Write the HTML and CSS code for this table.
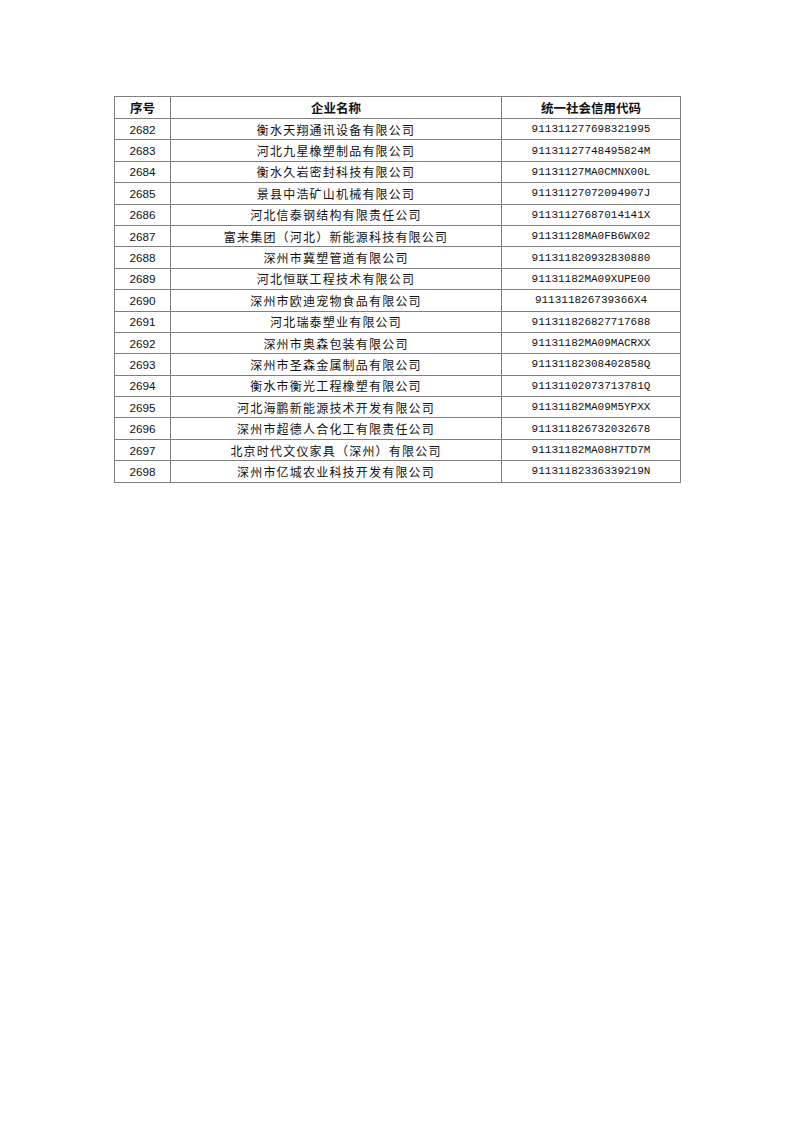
FILE: index.html
```html
<!DOCTYPE html>
<html lang="zh">
<head>
<meta charset="utf-8">
<link rel="stylesheet" href="styles.css">
</head>
<body>
<div class="page">
<table class="list">
<colgroup><col class="c-no"><col class="c-name"><col class="c-code"></colgroup>
<thead>
<tr><th>序号</th><th>企业名称</th><th>统一社会信用代码</th></tr>
</thead>
<tbody>
<tr><td class="no">2682</td><td class="name">衡水天翔通讯设备有限公司</td><td class="code">911311277698321995</td></tr>
<tr><td class="no">2683</td><td class="name">河北九星橡塑制品有限公司</td><td class="code">91131127748495824M</td></tr>
<tr><td class="no">2684</td><td class="name">衡水久岩密封科技有限公司</td><td class="code">91131127MA0CMNX00L</td></tr>
<tr><td class="no">2685</td><td class="name">景县中浩矿山机械有限公司</td><td class="code">91131127072094907J</td></tr>
<tr><td class="no">2686</td><td class="name">河北信泰钢结构有限责任公司</td><td class="code">91131127687014141X</td></tr>
<tr><td class="no">2687</td><td class="name">富来集团（河北）新能源科技有限公司</td><td class="code">91131128MA0FB6WX02</td></tr>
<tr><td class="no">2688</td><td class="name">深州市冀塑管道有限公司</td><td class="code">911311820932830880</td></tr>
<tr><td class="no">2689</td><td class="name">河北恒联工程技术有限公司</td><td class="code">91131182MA09XUPE00</td></tr>
<tr><td class="no">2690</td><td class="name">深州市欧迪宠物食品有限公司</td><td class="code">911311826739366X4</td></tr>
<tr><td class="no">2691</td><td class="name">河北瑞泰塑业有限公司</td><td class="code">911311826827717688</td></tr>
<tr><td class="no">2692</td><td class="name">深州市奥森包装有限公司</td><td class="code">91131182MA09MACRXX</td></tr>
<tr><td class="no">2693</td><td class="name">深州市圣森金属制品有限公司</td><td class="code">91131182308402858Q</td></tr>
<tr><td class="no">2694</td><td class="name">衡水市衡光工程橡塑有限公司</td><td class="code">91131102073713781Q</td></tr>
<tr><td class="no">2695</td><td class="name">河北海鹏新能源技术开发有限公司</td><td class="code">91131182MA09M5YPXX</td></tr>
<tr><td class="no">2696</td><td class="name">深州市超德人合化工有限责任公司</td><td class="code">911311826732032678</td></tr>
<tr><td class="no">2697</td><td class="name">北京时代文仪家具（深州）有限公司</td><td class="code">91131182MA08H7TD7M</td></tr>
<tr><td class="no">2698</td><td class="name">深州市亿城农业科技开发有限公司</td><td class="code">91131182336339219N</td></tr>
</tbody>
</table>
</div>
</body>
</html>
```
FILE: styles.css
```css
html, body {
  margin: 0;
  padding: 0;
  background: #ffffff;
}
.page {
  width: 793px;
  height: 1122px;
  padding: 96px 0 0 114px;
  box-sizing: border-box;
}
.list {
  border-collapse: collapse;
  table-layout: fixed;
  width: 566px;
  color: #111;
}
.c-no { width: 56px; }
.c-name { width: 331px; }
.c-code { width: 179px; }
.list th, .list td {
  border: 1px solid #808080;
  padding: 0;
  text-align: center;
  vertical-align: middle;
  white-space: nowrap;
  overflow: hidden;
}
.list thead tr { height: 22px; }
.list tbody tr { height: 21.4px; }
.list th {
  font-family: "Noto Sans CJK SC", "Noto Sans", sans-serif;
  font-size: 12.5px;
  font-weight: bold;
  line-height: 20px;
}
.no {
  font-family: "Liberation Sans", Arial, sans-serif;
  font-size: 11.7px;
}
.name {
  font-family: "Noto Sans CJK SC", sans-serif;
  font-size: 12px;
  letter-spacing: 1.2px;
  line-height: 19px;
}
.code {
  font-family: "Liberation Mono", "Courier New", monospace;
  font-size: 11px;
  letter-spacing: 0;
}
```
